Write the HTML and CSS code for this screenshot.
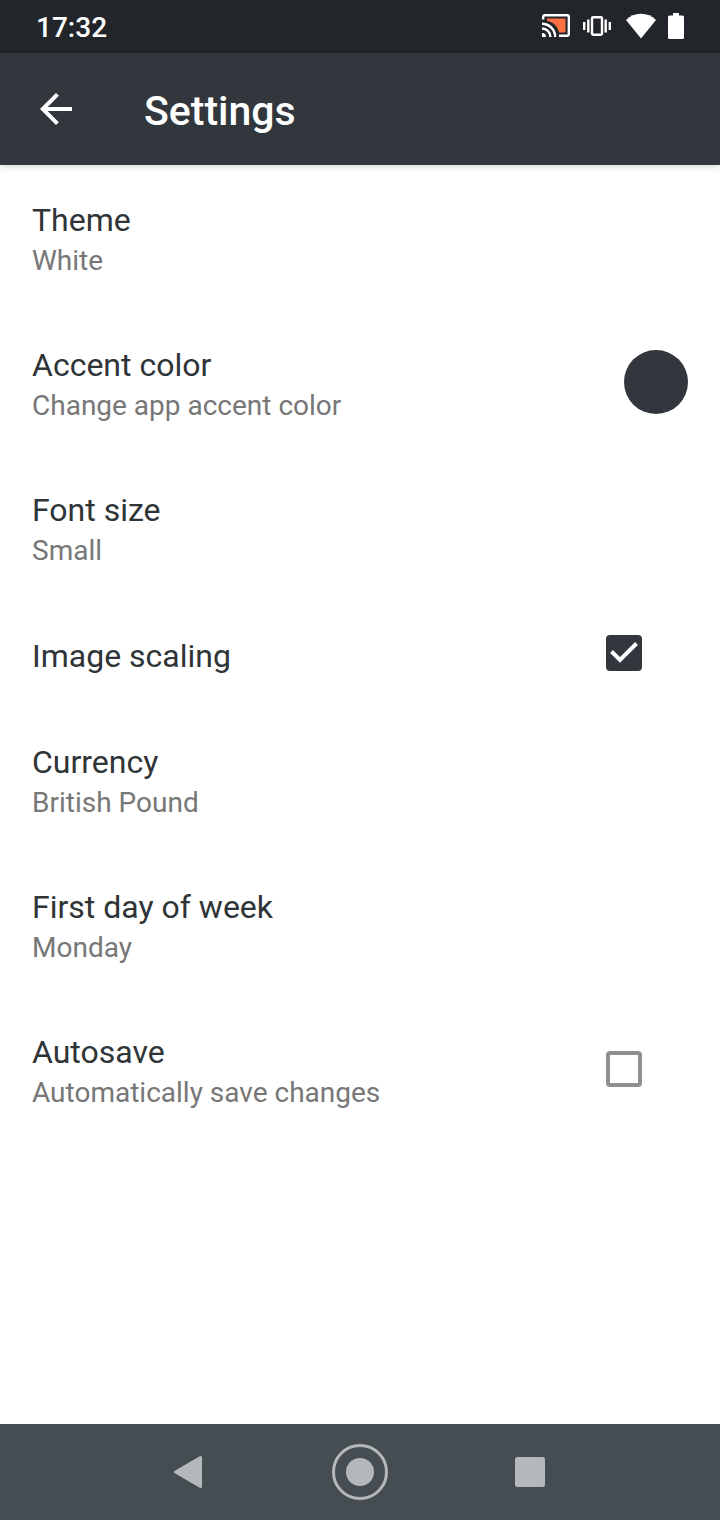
FILE: index.html
```
<!DOCTYPE html>
<html lang="en">
<head>
  <meta charset="UTF-8" />
  <meta name="viewport" content="width=device-width, initial-scale=1.0"/>
  <title>Settings</title>
  <link rel="stylesheet" href="styles.css">
</head>
<body>
  <div class="status-bar">
    <span class="clock">17:32</span>
    <div class="status-icons">
      <svg class="cast" width="28" height="24" viewBox="0 0 28 24" fill="none">
        <path d="M5 4.500h18.500v14H17C15.500 12 11 8 5 7z" fill="#ff7043"/>
        <path d="M1.200 5.500V2.800a1.600 1.600 0 0 1 1.600-1.600h22.400a1.600 1.600 0 0 1 1.600 1.600v17.400a1.600 1.600 0 0 1-1.600 1.600H17" stroke="#fff" stroke-width="2.400"/>
        <path d="M0 9.700a13.200 13.200 0 0 1 13.200 13.200M0 14.500a8.400 8.400 0 0 1 8.400 8.400" stroke="#fff" stroke-width="2.400"/>
        <path d="M0 19a4 4 0 0 1 4 4H0z" fill="#fff"/>
      </svg>
      <svg class="vibrate" width="28" height="20" viewBox="0 0 28 20" fill="none" stroke="#fff" stroke-width="2.400">
        <rect x="9" y="1.200" width="10" height="17.600" rx="1.200"/>
        <path d="M1.200 6v8M5.300 3.500v13M22.700 3.500v13M26.800 6v8"/>
      </svg>
      <svg class="wifi" width="30" height="26" viewBox="0 0 30 26">
        <path d="M15 25.500 0 7C4 3 9 .8 15 .8S26 3 30 7z" fill="#fff"/>
      </svg>
      <svg width="16" height="26" viewBox="0 0 16 26">
        <path d="M5 0h6v2.500h3.500A1.500 1.500 0 0 1 16 4v20.500a1.500 1.500 0 0 1-1.500 1.500h-13A1.500 1.500 0 0 1 0 24.500V4a1.500 1.500 0 0 1 1.500-1.500H5z" fill="#fff"/>
      </svg>
    </div>
  </div>

  <header class="app-bar">
    <button class="back" aria-label="Back">
      <svg width="48" height="48" viewBox="0 0 24 24">
        <path d="M20 11H7.830l5.590-5.590L12 4l-8 8 8 8 1.410-1.410L7.830 13H20v-2z" fill="#fff"/>
      </svg>
    </button>
    <h1>Settings</h1>
  </header>

  <main class="settings">
    <button class="row">
      <span class="text">
        <span class="title">Theme</span>
        <span class="summary">White</span>
      </span>
    </button>
    <button class="row">
      <span class="text">
        <span class="title">Accent color</span>
        <span class="summary">Change app accent color</span>
      </span>
      <span class="swatch"></span>
    </button>
    <button class="row">
      <span class="text">
        <span class="title">Font size</span>
        <span class="summary">Small</span>
      </span>
    </button>
    <label class="row">
      <span class="text">
        <span class="title">Image scaling</span>
      </span>
      <input type="checkbox" checked>
    </label>
    <button class="row">
      <span class="text">
        <span class="title">Currency</span>
        <span class="summary">British Pound</span>
      </span>
    </button>
    <button class="row">
      <span class="text">
        <span class="title">First day of week</span>
        <span class="summary">Monday</span>
      </span>
    </button>
    <label class="row">
      <span class="text">
        <span class="title">Autosave</span>
        <span class="summary">Automatically save changes</span>
      </span>
      <input type="checkbox">
    </label>
  </main>

  <nav class="nav-bar">
    <button aria-label="Back">
      <svg width="60" height="60" viewBox="0 0 60 60">
        <path d="M15.500 30 40.500 15.500v29z" fill="#b3b8ba" stroke="#b3b8ba" stroke-width="3" stroke-linejoin="round"/>
      </svg>
    </button>
    <button aria-label="Home">
      <svg width="60" height="60" viewBox="0 0 60 60">
        <circle cx="30" cy="30" r="26.500" fill="none" stroke="#b3b8ba" stroke-width="3"/>
        <circle cx="30" cy="30" r="14" fill="#b3b8ba"/>
      </svg>
    </button>
    <button aria-label="Recent apps">
      <svg width="60" height="60" viewBox="0 0 60 60">
        <rect x="15" y="15" width="30" height="30" rx="2.500" fill="#b3b8ba"/>
      </svg>
    </button>
  </nav>
</body>
</html>
```
FILE: styles.css
```
* {
  box-sizing: border-box;
}

body {
  margin: 0;
  min-height: 100vh;
  display: flex;
  flex-direction: column;
  font-family: Roboto, sans-serif;
  background: #fff;
  color: #2f3437;
}

button {
  padding: 0;
  border: none;
  background: none;
  font: inherit;
  color: inherit;
  cursor: pointer;
}

svg {
  display: block;
}

.status-bar {
  display: flex;
  align-items: center;
  justify-content: space-between;
  height: 53px;
  padding: 0 36px 1px;
  background: #22262a;
  color: #fff;
}

.clock {
  padding-top: 3px;
  font-size: 28px;
  font-weight: 500;
}

.status-icons {
  display: flex;
  align-items: center;
}

.cast {
  margin-right: 13px;
}

.vibrate {
  margin-right: 15px;
}

.wifi {
  margin-right: 12px;
}

.app-bar {
  display: flex;
  align-items: center;
  gap: 64px;
  height: 112px;
  padding: 0 32px;
  background: #32373e;
  color: #fff;
  box-shadow: 0 1px 8px rgba(0, 0, 0, 0.18);
}

h1 {
  margin: 0;
  padding-top: 4px;
  font-size: 41px;
  font-weight: 500;
}

.settings {
  flex: 1;
}

.row {
  display: flex;
  align-items: center;
  justify-content: space-between;
  width: 100%;
  min-height: 107px;
  padding: 0 32px 1px;
  text-align: left;
  cursor: pointer;
}

.text {
  padding: 35px 0 29px;
}

.title,
.summary {
  display: block;
}

.title {
  font-size: 32px;
  line-height: 41px;
}

.summary {
  font-size: 28px;
  line-height: 39px;
  color: #777;
}

.swatch {
  width: 64px;
  height: 64px;
  border-radius: 50%;
  background: #32373e;
}

input[type="checkbox"] {
  appearance: none;
  width: 36px;
  height: 36px;
  margin: 0 46px 0 0;
  border: 4px solid #8f8f8f;
  border-radius: 4px;
}

input[type="checkbox"]:checked {
  border: none;
  background: #32373e url("data:image/svg+xml,%3Csvg xmlns='http://www.w3.org/2000/svg' viewBox='0 0 36 36'%3E%3Cpath d='M5.500 16.500l8.500 8.500L30.500 8.500' fill='none' stroke='white' stroke-width='4'/%3E%3C/svg%3E");
}

.nav-bar {
  display: flex;
  align-items: center;
  justify-content: center;
  gap: 110px;
  height: 96px;
  background: #454d52;
}
```
